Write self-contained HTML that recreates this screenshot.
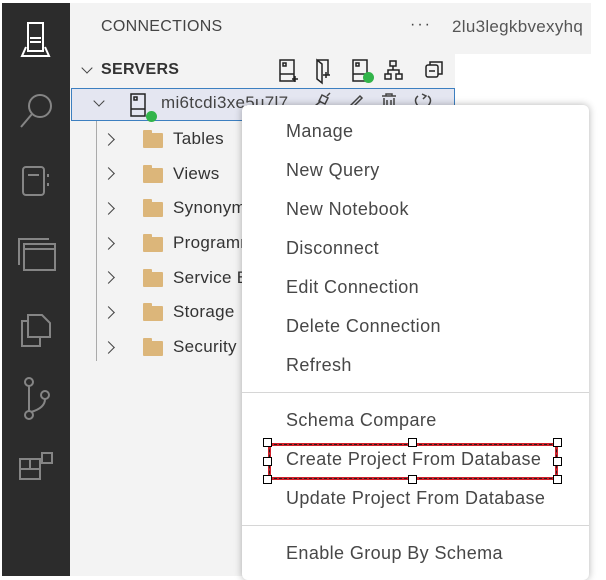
<!DOCTYPE html>
<html><head><meta charset="utf-8"><style>
*{margin:0;padding:0;box-sizing:border-box}
body{width:606px;height:576px;overflow:hidden;background:#fff;font-family:"Segoe UI","Liberation Sans",sans-serif;position:relative}
.abs{position:absolute}
#act{left:2px;top:3px;width:68px;height:573px;background:#2c2c2c}
#side{left:70px;top:3px;width:385px;height:573px;background:#f3f3f3}
#tabs{left:455px;top:3px;width:136px;height:51px;background:#f3f3f3}
.t{position:absolute;color:#333;font-size:17px;white-space:nowrap;letter-spacing:.3px}
.fold{position:absolute;width:20px;height:15px;background:#dcb67a;border-radius:1px}
.fold:before{content:"";position:absolute;left:0;top:-3px;width:9px;height:4px;background:#dcb67a;border-radius:1px 1px 0 0}
.chev{position:absolute;width:9px;height:9px;border-right:1.5px solid #444;border-bottom:1.5px solid #444}
#menu{left:242px;top:105px;width:347px;height:475px;background:#fff;border-radius:6px;box-shadow:0 0 8px rgba(0,0,0,.3)}
.mi{position:absolute;left:44px;font-size:18px;color:#474747;white-space:nowrap;line-height:24px;letter-spacing:.4px}
.sep{position:absolute;left:0;width:347px;height:1px;background:#d6d6d6}
.h{position:absolute;width:9px;height:9px;background:#fff;border:1.2px solid #000}
</style></head><body>
<div class="abs" id="act">
<svg class="abs" style="left:0;top:0" width="68" height="500" viewBox="0 0 68 500" fill="none" stroke-width="2">
 <g stroke="#fff"><rect x="26" y="20" width="15" height="28"/><line x1="28" y1="35" x2="39" y2="35"/><line x1="28" y1="39" x2="39" y2="39"/><path d="M24 44 L20 53 L47 53 L43 44"/></g>
 <g stroke="#858585"><circle cx="38" cy="103" r="11"/><line x1="30" y1="111" x2="19" y2="124"/>
 <rect x="21" y="164" width="21" height="28" rx="3"/><line x1="26" y1="172" x2="37" y2="172"/><line x1="46" y1="171" x2="46" y2="174"/><line x1="46" y1="180" x2="46" y2="183"/>
 <rect x="22" y="241" width="31" height="26"/><line x1="22" y1="246" x2="53" y2="246"/><path d="M17 262 V236 H47"/>
 <path d="M26 312 H40 L48 320 V334 H26 Z"/><path d="M26 318 H20 V343 H38 V334"/>
 <circle cx="27" cy="379" r="4"/><circle cx="27" cy="412" r="4"/><circle cx="43" cy="392" r="4"/><line x1="27" y1="383" x2="27" y2="408"/><path d="M43 396 Q43 405 29 409"/>
 <rect x="18" y="456" width="10" height="10"/><rect x="28" y="456" width="10" height="10"/><rect x="18" y="466" width="20" height="10"/><rect x="40" y="450" width="10" height="10"/></g>
</svg>
</div>
<div class="abs" id="side"></div>
<div class="abs" id="tabs"></div>
<div class="t" style="left:101px;top:18px;font-size:16px;color:#444">CONNECTIONS</div>
<div class="t" style="left:410px;top:16px;font-size:16px;color:#444;letter-spacing:2px">···</div>
<div class="t" style="left:452px;top:17px;color:#555">2lu3legkbvexyhq</div>
<div class="chev" style="left:83px;top:64px;transform:rotate(45deg);width:8px;height:8px"></div>
<div class="t" style="left:101px;top:61px;font-weight:bold;font-size:16px;color:#333">SERVERS</div>
<svg class="abs" style="left:275px;top:57px" width="175" height="30" fill="none" stroke="#222" stroke-width="1.5">
 <rect x="5" y="3" width="14" height="21"/><line x1="5" y1="17" x2="19" y2="17"/><rect x="8" y="6" width="3" height="3"/><path d="M17 22h6M20 19v6"/>
 <path d="M42 3h11v15M42 3l5 4v19l-5-4z"/><path d="M48 18h7M51 15v6"/>
 <rect x="78" y="3" width="14" height="21"/><line x1="78" y1="17" x2="92" y2="17"/><rect x="81" y="6" width="3" height="3"/>
 <rect x="115" y="4" width="6" height="5"/><rect x="110" y="17" width="6" height="5"/><rect x="121" y="17" width="6" height="5"/><path d="M118 9v4M113 17v-4h11v4"/>
 <rect x="151" y="8" width="12" height="12" rx="2"/><path d="M155 8V5h12v12h-4M154 14h6"/>
</svg>
<div class="abs" style="left:363px;top:72px;width:11px;height:11px;border-radius:50%;background:#32b44a"></div>
<div class="abs" style="left:71px;top:88px;width:384px;height:33px;background:#e4e6f1;border:1px solid #3c7fc0"></div>
<div class="chev" style="left:95px;top:97px;transform:rotate(45deg);width:8px;height:8px"></div>
<svg class="abs" style="left:127px;top:92px" width="30" height="28" fill="none" stroke="#222" stroke-width="1.5"><rect x="4" y="2" width="14" height="22"/><line x1="4" y1="17" x2="18" y2="17"/><rect x="7" y="5" width="3" height="3"/></svg>
<div class="abs" style="left:146px;top:111px;width:11px;height:11px;border-radius:50%;background:#32b44a"></div>
<div class="t" style="left:161px;top:93px;color:#444">mi6tcdi3xe5u7l7</div>
<svg class="abs" style="left:310px;top:92px" width="130" height="16" fill="none" stroke="#444" stroke-width="1.5"><path d="M5 14l6-5M12 3l6 3-3 6-6-3zM20 1l-3 3"/><path d="M40 14l10-10 2 2-10 10z"/><path d="M72 4h14M76 4V2h6v2M74 6v9h10V6M77 8v6M81 8v6"/><path d="M108 4q-5 4 0 10M112 2l4 2-3 3M118 4q5 4 0 10"/></svg>
<div class="abs" style="left:96px;top:121px;width:1px;height:240px;background:#aaa"></div>
<div class="chev" style="left:104px;top:135px;transform:rotate(-45deg)"></div><div class="fold" style="left:143px;top:133px"></div><div class="t" style="left:173px;top:129px">Tables</div>
<div class="chev" style="left:104px;top:169px;transform:rotate(-45deg)"></div><div class="fold" style="left:143px;top:168px"></div><div class="t" style="left:173px;top:164px">Views</div>
<div class="chev" style="left:104px;top:204px;transform:rotate(-45deg)"></div><div class="fold" style="left:143px;top:202px"></div><div class="t" style="left:173px;top:198px">Synonyms</div>
<div class="chev" style="left:104px;top:239px;transform:rotate(-45deg)"></div><div class="fold" style="left:143px;top:237px"></div><div class="t" style="left:173px;top:233px">Programmability</div>
<div class="chev" style="left:104px;top:273px;transform:rotate(-45deg)"></div><div class="fold" style="left:143px;top:272px"></div><div class="t" style="left:173px;top:268px">Service Broker</div>
<div class="chev" style="left:104px;top:308px;transform:rotate(-45deg)"></div><div class="fold" style="left:143px;top:306px"></div><div class="t" style="left:173px;top:302px">Storage</div>
<div class="chev" style="left:104px;top:343px;transform:rotate(-45deg)"></div><div class="fold" style="left:143px;top:341px"></div><div class="t" style="left:173px;top:337px">Security</div>
<div class="abs" id="menu">
<div class="mi" style="top:14px">Manage</div>
<div class="mi" style="top:53px">New Query</div>
<div class="mi" style="top:92px">New Notebook</div>
<div class="mi" style="top:131px">Disconnect</div>
<div class="mi" style="top:170px">Edit Connection</div>
<div class="mi" style="top:209px">Delete Connection</div>
<div class="mi" style="top:248px">Refresh</div>
<div class="sep" style="top:287px"></div>
<div class="mi" style="top:303px">Schema Compare</div>
<div class="mi" style="top:342px">Create Project From Database</div>
<div class="mi" style="top:381px">Update Project From Database</div>
<div class="sep" style="top:420px"></div>
<div class="mi" style="top:436px">Enable Group By Schema</div>
</div>
<div class="abs" style="left:268px;top:443px;width:290px;height:37px;border:3px solid #d0202a;outline:1px dashed #222;outline-offset:-2px"></div>
<div class="h" style="left:263px;top:438px"></div><div class="h" style="left:408px;top:438px"></div><div class="h" style="left:553px;top:438px"></div>
<div class="h" style="left:263px;top:457px"></div><div class="h" style="left:553px;top:457px"></div>
<div class="h" style="left:263px;top:475px"></div><div class="h" style="left:408px;top:475px"></div><div class="h" style="left:553px;top:475px"></div>
</body></html>
